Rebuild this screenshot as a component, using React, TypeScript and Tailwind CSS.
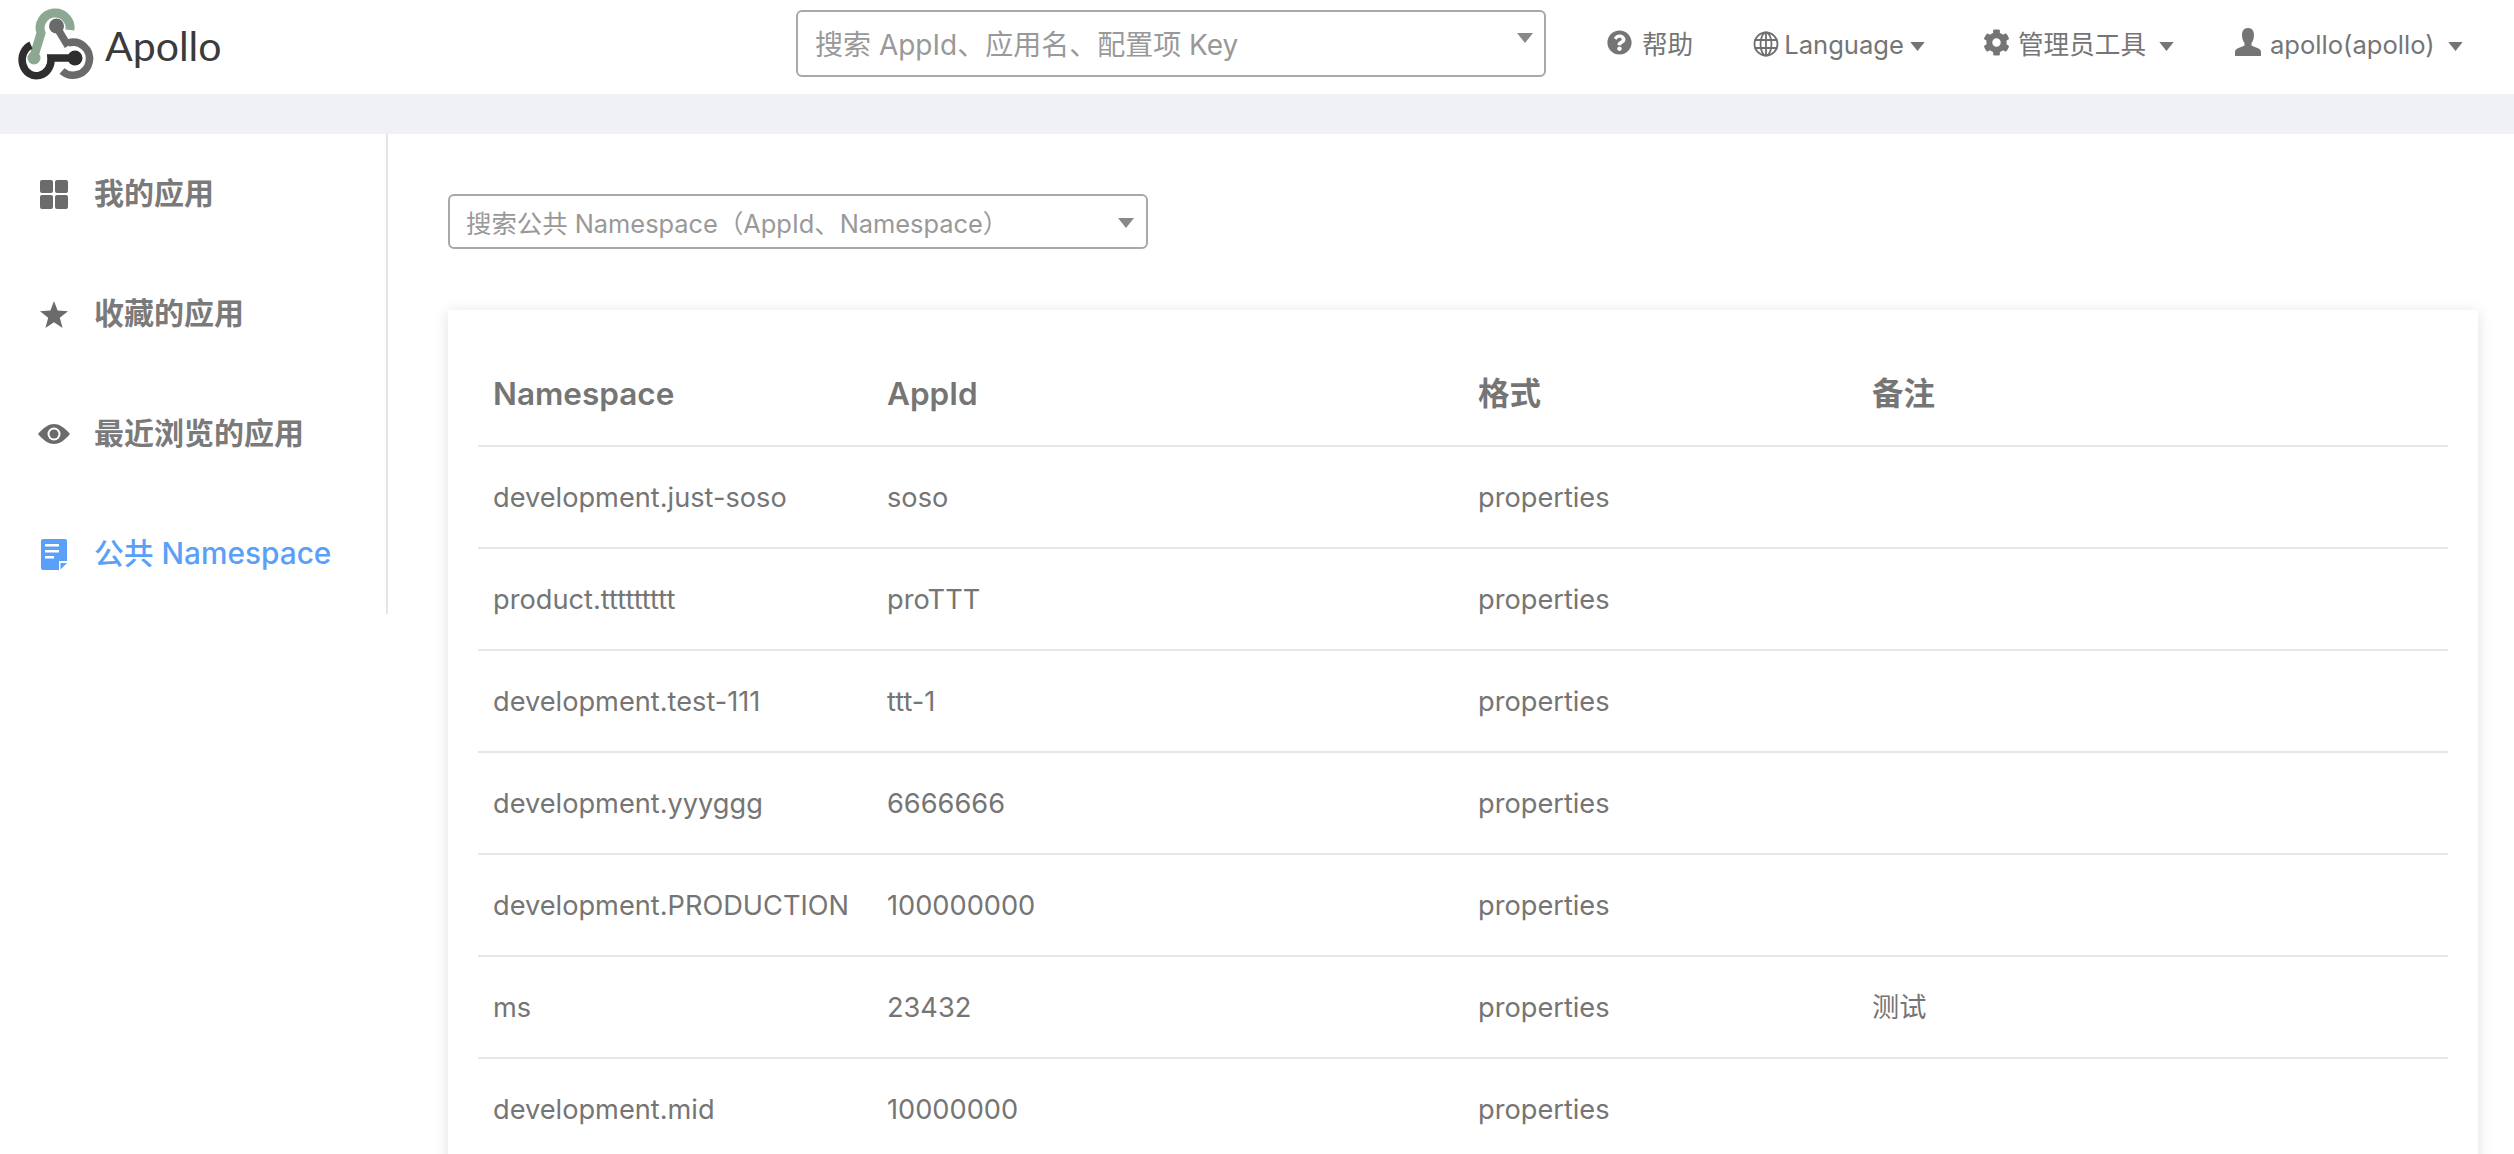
import { FaCog, FaQuestionCircle } from 'react-icons/fa'

const SANS = 'font-[Inter,"Noto_Sans_CJK_SC",sans-serif]'

const rows = [
  { ns: 'development.just-soso', app: 'soso', note: '' },
  { ns: 'product.ttttttttt', app: 'proTTT', note: '' },
  { ns: 'development.test-111', app: 'ttt-1', note: '' },
  { ns: 'development.yyyggg', app: '6666666', note: '' },
  { ns: 'development.PRODUCTION', app: '100000000', note: '' },
  { ns: 'ms', app: '23432', note: '测试' },
  { ns: 'development.mid', app: '10000000', note: '' },
]

function Logo() {
  return (
    <svg width="90" height="87" viewBox="0 0 90 87" fill="none" className="shrink-0">
      {/* green */}
      <path d="M60 30 A15 15 0 1 0 31 33 L 24 56" stroke="#8da892" strokeWidth="9" />
      <circle cx="24" cy="58" r="6.5" fill="#8da892" />
      {/* grey */}
      <path d="M46 26 L 58 46" stroke="#6a6a6a" strokeWidth="7.5" />
      <circle cx="46.5" cy="26" r="7.5" fill="#6a6a6a" />
      <path d="M58 43 A16.5 16.5 0 1 1 52 71" stroke="#6a6a6a" strokeWidth="7.5" />
      {/* black */}
      <path d="M65 58 H 41 A 14.5 16 0 1 1 21 45" stroke="#2e2e2e" strokeWidth="7.5" />
      <circle cx="65" cy="58" r="7.5" fill="#2e2e2e" />
    </svg>
  )
}

function Caret({ className }: { className: string }) {
  return (
    <svg viewBox="0 0 16 10" className={className} fill="currentColor">
      <path d="M0 0 H16 L8 10 Z" />
    </svg>
  )
}

function Globe() {
  return (
    <svg width="26" height="26" viewBox="0 0 26 26" fill="none" stroke="#6f6f6f" strokeWidth="1.8">
      <circle cx="13" cy="13" r="11.5" />
      <ellipse cx="13" cy="13" rx="5.5" ry="11.5" />
      <path d="M13 1.5 V24.5 M1.5 9 H24.5 M1.5 17 H24.5" />
    </svg>
  )
}

function UserIcon() {
  return (
    <svg width="26" height="28" viewBox="0 0 26 28" fill="#757575">
      <path d="M13 0 C8.5 0 7 3.5 7 7 C7 10.5 8 13 9.5 15 V17.5 C6 19.5 0 20 0 24 V28 H26 V24 C26 20 20 19.5 16.5 17.5 V15 C18 13 19 10.5 19 7 C19 3.5 17.5 0 13 0 Z" />
    </svg>
  )
}

function GridIcon() {
  return (
    <div className="grid grid-cols-2 gap-[2px] w-[28px] h-[29px]">
      <span className="rounded-[2px] bg-[#6b6b6b]" />
      <span className="rounded-[2px] bg-[#6b6b6b]" />
      <span className="rounded-[2px] bg-[#6b6b6b]" />
      <span className="rounded-[2px] bg-[#6b6b6b]" />
    </div>
  )
}

function StarIcon() {
  return (
    <svg width="28" height="27" viewBox="0 0 28 27" fill="#6b6b6b">
      <path d="M14 0 L17.6 9.6 L28 10.2 L19.8 16.7 L22.6 27 L14 21.2 L5.4 27 L8.2 16.7 L0 10.2 L10.4 9.6 Z" />
    </svg>
  )
}

function EyeIcon() {
  return (
    <svg width="32" height="20" viewBox="0 0 32 20">
      <path d="M0 10 C6 3 11 0 16 0 C21 0 26 3 32 10 C26 17 21 20 16 20 C11 20 6 17 0 10 Z" fill="#6b6b6b" />
      <circle cx="16" cy="10" r="6.5" fill="#ffffff" />
      <circle cx="16" cy="10" r="4.5" fill="#6b6b6b" />
    </svg>
  )
}

function DocIcon() {
  return (
    <svg width="26" height="31" viewBox="0 0 26 31">
      <path d="M2 0 H24 A2 2 0 0 1 26 2 V22 H18 V31 H2 A2 2 0 0 1 0 29 V2 A2 2 0 0 1 2 0 Z" fill="#5aa0f8" />
      <path d="M4 5 H18 V7.5 H4 Z M4 11 H18 V13.5 H4 Z M4 17 H13 V19.5 H4 Z" fill="#ffffff" />
      <path d="M19.5 24 H26 L19.5 30.5 Z" fill="#5aa0f8" />
    </svg>
  )
}

function SideItem({ icon, label, active }: { icon: React.ReactNode; label: string; active?: boolean }) {
  return (
    <div className={`h-[120px] flex items-center ${active ? 'text-[29.8px] font-medium text-[#5aa0f8]' : 'text-[30px] font-semibold text-[#7a7a7a]'}`}>
      <div className="w-[38px] ml-[35px] mr-[21px] flex justify-center">{icon}</div>
      <span className="-mt-[2px]">{label}</span>
    </div>
  )
}

export default function App() {
  return (
    <div className={`h-[1154px] overflow-hidden bg-white text-[#757575] ${SANS}`}>
      <header className="h-[94px] flex items-center pb-[7px]">
        <div className="w-[796px] flex items-center pl-[10px] gap-[5px]">
          <Logo />
          <span className="text-[41px] leading-none text-[#3b3b3b] font-['Lato',sans-serif] mt-[4px]">Apollo</span>
        </div>
        <div className="w-[750px] h-[67px] shrink-0 border-2 border-[#a8a8a8] rounded-[6px] flex items-center pl-[17px] pt-[3px] relative">
          <span className="text-[28px] text-[#999999]">搜索 AppId、应用名、配置项 Key</span>
          <Caret className="w-[16px] h-[10px] text-[#888888] absolute right-[11px] top-[21px]" />
        </div>
        <div className="flex items-center text-[25.6px] ml-[61px] mt-[3px]">
          <span className="-mt-[4px]"><FaQuestionCircle size={25} color="#757575" /></span>
          <span className="ml-[10px]">帮助</span>
          <span className="ml-[60px] -mt-[2px]"><Globe /></span>
          <span className="ml-[5px]">Language</span>
          <Caret className="w-[15px] h-[9px] ml-[6px] mt-[4px] text-[#757575]" />
          <span className="ml-[58px] -mt-[4px]"><FaCog size={27} color="#757575" /></span>
          <span className="ml-[8px]">管理员工具</span>
          <Caret className="w-[15px] h-[9px] ml-[13px] mt-[4px] text-[#757575]" />
          <span className="ml-[61px] -mt-[6px]"><UserIcon /></span>
          <span className="ml-[9px]">apollo(apollo)</span>
          <Caret className="w-[15px] h-[9px] ml-[13px] mt-[4px] text-[#757575]" />
        </div>
      </header>

      <div className="h-[40px] bg-[#f0f1f5]" />

      <div className="flex items-start">
        <aside className="w-[388px] h-[480px] shrink-0 border-r-2 border-[#e4e4ea]">
          <SideItem icon={<GridIcon />} label="我的应用" />
          <SideItem icon={<StarIcon />} label="收藏的应用" />
          <SideItem icon={<EyeIcon />} label="最近浏览的应用" />
          <SideItem icon={<DocIcon />} label="公共 Namespace" active />
        </aside>

        <main className="flex-1 pl-[60px] pr-[36px] pt-[60px]">
          <div className="w-[700px] h-[55px] border-2 border-[#a8a8a8] rounded-[6px] flex items-center pl-[16px] pt-[6px] relative">
            <span className="text-[25.4px] text-[#999999]">搜索公共 Namespace（AppId、Namespace）</span>
            <Caret className="w-[16px] h-[10px] text-[#888888] absolute right-[12px] top-[22px]" />
          </div>

          <div className="mt-[61px] bg-white px-[30px] pt-[32px] shadow-[0_2px_14px_rgba(0,0,0,0.12)]">
            <div className="grid grid-cols-[394px_590px_394px_1fr] h-[105px] items-center border-b-2 border-[#e6e6ec] text-[31.5px] font-semibold">
              <div className="pl-[15px]">Namespace</div>
              <div className="pl-[15px]">AppId</div>
              <div className="pl-[16px]">格式</div>
              <div className="pl-[16px]">备注</div>
            </div>
            {rows.map((r) => (
              <div key={r.ns} className="grid grid-cols-[394px_590px_394px_1fr] h-[102px] items-center border-b-2 border-[#e6e6ec] text-[27.2px] pt-[3px]">
                <div className="pl-[15px] whitespace-nowrap">{r.ns}</div>
                <div className="pl-[15px]">{r.app}</div>
                <div className="pl-[16px]">properties</div>
                <div className="pl-[16px]">{r.note}</div>
              </div>
            ))}
            <div className="h-[102px]" />
          </div>
        </main>
      </div>
    </div>
  )
}
